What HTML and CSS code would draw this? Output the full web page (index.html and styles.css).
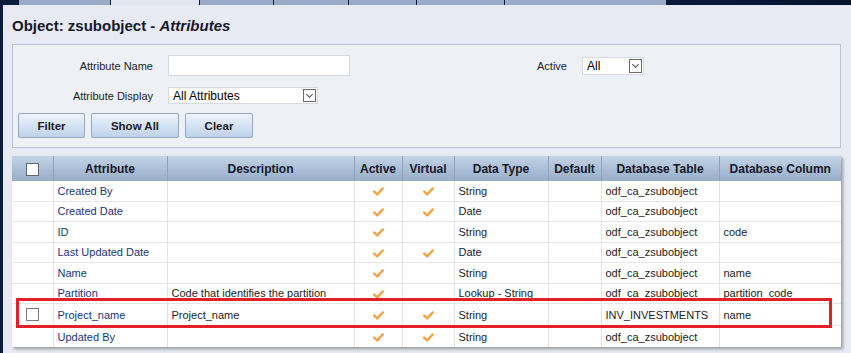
FILE: index.html
```html
<!DOCTYPE html>
<html lang="en">
<head>
    <meta charset="UTF-8">
    <title>Object: zsubobject - Attributes</title>
    <link rel="stylesheet" href="styles.css">
</head>
<body>

    <svg width="0" height="0" class="defs">
        <symbol id="chk" viewBox="0 0 11 9">
            <path d="M1.2 4.6 L4.2 7.4 L9.8 1.4" fill="none" stroke="#f2a446" stroke-width="2.4" stroke-linecap="round" stroke-linejoin="round"/>
        </symbol>
    </svg>

    <div class="tabs">
        <span class="tab" style="width:91px"></span>
        <span class="tab active" style="width:88px"></span>
        <span class="tab" style="width:73px"></span>
        <span class="tab" style="width:74px"></span>
        <span class="tab" style="width:67px"></span>
        <span class="tab" style="width:87px"></span>
        <span class="tab" style="width:161px"></span>
    </div>

    <div class="page">
        <h1 class="title">Object: zsubobject - <em>Attributes</em></h1>

        <div class="filter">
            <div class="filter-grid">
                <label class="lbl">Attribute Name</label>
                <div><input type="text" class="txt"></div>
                <label class="lbl">Active</label>
                <div>
                    <span class="sel sel-active">All<span class="arrow"></span></span>
                </div>

                <label class="lbl">Attribute Display</label>
                <div>
                    <span class="sel sel-display">All Attributes<span class="arrow"></span></span>
                </div>
                <span></span>
                <span></span>
            </div>
            <div class="buttons">
                <button class="btn w-filter">Filter</button>
                <button class="btn w-show">Show All</button>
                <button class="btn w-clear">Clear</button>
            </div>
        </div>

        <div class="grid-wrap">
            <table class="grid">
                <colgroup>
                    <col style="width:41px">
                    <col style="width:114px">
                    <col style="width:187px">
                    <col style="width:48px">
                    <col style="width:52px">
                    <col style="width:94px">
                    <col style="width:53px">
                    <col style="width:118px">
                    <col style="width:122px">
                </colgroup>
                <thead>
                    <tr>
                        <th><span class="cb cb-head"></span></th>
                        <th>Attribute</th>
                        <th>Description</th>
                        <th>Active</th>
                        <th>Virtual</th>
                        <th>Data Type</th>
                        <th>Default</th>
                        <th>Database Table</th>
                        <th>Database Column</th>
                    </tr>
                </thead>
                <tbody>
                    <tr>
                        <td></td><td class="name">Created By</td><td></td>
                        <td class="c"><svg class="ck"><use href="#chk"/></svg></td>
                        <td class="c"><svg class="ck"><use href="#chk"/></svg></td>
                        <td>String</td><td></td><td>odf_ca_zsubobject</td><td></td>
                    </tr>
                    <tr>
                        <td></td><td class="name">Created Date</td><td></td>
                        <td class="c"><svg class="ck"><use href="#chk"/></svg></td>
                        <td class="c"><svg class="ck"><use href="#chk"/></svg></td>
                        <td>Date</td><td></td><td>odf_ca_zsubobject</td><td></td>
                    </tr>
                    <tr>
                        <td></td><td class="name">ID</td><td></td>
                        <td class="c"><svg class="ck"><use href="#chk"/></svg></td>
                        <td class="c"></td>
                        <td>String</td><td></td><td>odf_ca_zsubobject</td><td>code</td>
                    </tr>
                    <tr>
                        <td></td><td class="name">Last Updated Date</td><td></td>
                        <td class="c"><svg class="ck"><use href="#chk"/></svg></td>
                        <td class="c"><svg class="ck"><use href="#chk"/></svg></td>
                        <td>Date</td><td></td><td>odf_ca_zsubobject</td><td></td>
                    </tr>
                    <tr>
                        <td></td><td class="name">Name</td><td></td>
                        <td class="c"><svg class="ck"><use href="#chk"/></svg></td>
                        <td class="c"></td>
                        <td>String</td><td></td><td>odf_ca_zsubobject</td><td>name</td>
                    </tr>
                    <tr>
                        <td></td><td class="name">Partition</td><td>Code that identifies the partition</td>
                        <td class="c"><svg class="ck"><use href="#chk"/></svg></td>
                        <td class="c"></td>
                        <td>Lookup - String</td><td></td><td>odf_ca_zsubobject</td><td>partition_code</td>
                    </tr>
                    <tr class="tall">
                        <td class="c"><span class="cb"></span></td><td class="name">Project_name</td><td>Project_name</td>
                        <td class="c"><svg class="ck"><use href="#chk"/></svg></td>
                        <td class="c"><svg class="ck"><use href="#chk"/></svg></td>
                        <td>String</td><td></td><td>INV_INVESTMENTS</td><td>name</td>
                    </tr>
                    <tr class="tall">
                        <td></td><td class="name">Updated By</td><td></td>
                        <td class="c"><svg class="ck"><use href="#chk"/></svg></td>
                        <td class="c"><svg class="ck"><use href="#chk"/></svg></td>
                        <td>String</td><td></td><td>odf_ca_zsubobject</td><td></td>
                    </tr>
                </tbody>
            </table>
            <div class="highlight"></div>
        </div>
    </div>

</body>
</html>
```

FILE: styles.css
```css
body {
    margin: 0;
    background: #0b1b3a;
    font-family: "Liberation Sans", Arial, sans-serif;
    font-size: 11px;
    color: #1c1c1c;
    height: 353px;
    overflow: hidden;
}

.defs {
    position: absolute;
}

/* barra de pestañas superior */
.tabs {
    height: 5px;
    display: flex;
    padding-left: 19px;
    background: linear-gradient(to right, #0b1b3a 0%, #0b1b3a 75%, #06142c 100%);
}

.tab {
    background: #98abc6;
    margin-right: 1px;
}

.tab.active {
    background: #e1e5ed;
}

.page {
    margin-left: 3px;
    background: #e7eaf3;
    height: 348px;
    padding: 0 10px 0 9px;
}

.title {
    margin: 0;
    padding: 12px 0 0 0;
    height: 27px;
    font-size: 15px;
    font-weight: bold;
    color: #17182a;
}

.title em {
    font-style: italic;
}

/* caja de filtros */
.filter {
    background: #edf0f5;
    border: 1px solid #b9c4d5;
    padding: 10px 5px 8px 5px;
    height: 84px;
}

.filter-grid {
    display: grid;
    grid-template-columns: 135px 352px 32px 1fr;
    column-gap: 15px;
    row-gap: 11px;
    align-items: center;
}

.lbl {
    text-align: right;
    color: #1c1c1c;
    white-space: nowrap;
}

.txt {
    display: block;
    width: 182px;
    height: 21px;
    box-sizing: border-box;
    border: 1px solid #d6dae2;
    background: #fff;
    margin: 0;
}

.sel {
    position: relative;
    display: block;
    box-sizing: border-box;
    background: #fff;
    border: 1px solid #d6dae2;
    padding: 1px 4px;
    color: #000;
    font-size: 12px;
    line-height: 14px;
}

.sel-display {
    width: 150px;
    height: 17px;
}

.sel-active {
    width: 62px;
    height: 18px;
    line-height: 15px;
}

.arrow {
    position: absolute;
    right: 1px;
    top: 1px;
    bottom: 1px;
    width: 13px;
    border: 1px solid #6a6a6a;
    box-sizing: border-box;
    background: #fff;
}

.arrow::after {
    content: "";
    position: absolute;
    left: 3px;
    top: 2px;
    width: 4px;
    height: 4px;
    border-right: 1px solid #555;
    border-bottom: 1px solid #555;
    transform: rotate(45deg);
}

.buttons {
    display: flex;
    gap: 6px;
    margin-top: 9px;
}

.btn {
    height: 25px;
    border: 1px solid #94a8c2;
    border-radius: 2px;
    background: linear-gradient(to bottom, #eef4fc 0%, #d5e3f4 50%, #bfd2ea 100%);
    font-family: "Liberation Sans", Arial, sans-serif;
    font-size: 11.5px;
    font-weight: bold;
    color: #1c1c24;
    padding: 0;
}

.w-filter { width: 67px; }
.w-show { width: 88px; }
.w-clear { width: 68px; }

/* tabla de atributos */
.grid-wrap {
    position: relative;
    margin-top: 8px;
    width: 829px;
}

.grid {
    width: 829px;
    table-layout: fixed;
    border-collapse: collapse;
    background: #fff;
    box-shadow: 2px 2px 3px rgba(0, 0, 0, 0.35);
}

.grid th {
    height: 25px;
    padding: 0;
    background: linear-gradient(to bottom, #c3d3e5 0%, #a9bed5 55%, #98aec8 100%);
    border-left: 1px solid #8ea3bb;
    font-size: 12px;
    font-weight: bold;
    color: #17182a;
    text-align: center;
    white-space: nowrap;
}

.grid th:first-child {
    border-left: none;
}

.grid td {
    height: 19.5px;
    padding: 0 4px;
    border-left: 1px solid #e3e3e3;
    border-top: 1px solid #e6e6e6;
    white-space: nowrap;
    overflow: hidden;
    color: #1c1c1c;
}

.grid tr.tall td {
    height: 21px;
}

.grid tbody tr:first-child td {
    border-top: none;
}

.grid td:first-child {
    border-left: none;
}

.grid td.name {
    color: #17367a;
}

.grid td.c {
    text-align: center;
    padding: 0;
}

.ck {
    width: 11px;
    height: 9px;
    vertical-align: middle;
}

.cb {
    display: inline-block;
    width: 13px;
    height: 13px;
    box-sizing: border-box;
    border: 1px solid #7c7c7c;
    background: #fff;
    vertical-align: middle;
}

.cb-head {
    border-color: #5f6770;
}

/* recuadro rojo de anotación */
.highlight {
    position: absolute;
    left: 4px;
    top: 142px;
    width: 816px;
    height: 30px;
    box-sizing: border-box;
    border: 3px solid #e3202a;
}
```
